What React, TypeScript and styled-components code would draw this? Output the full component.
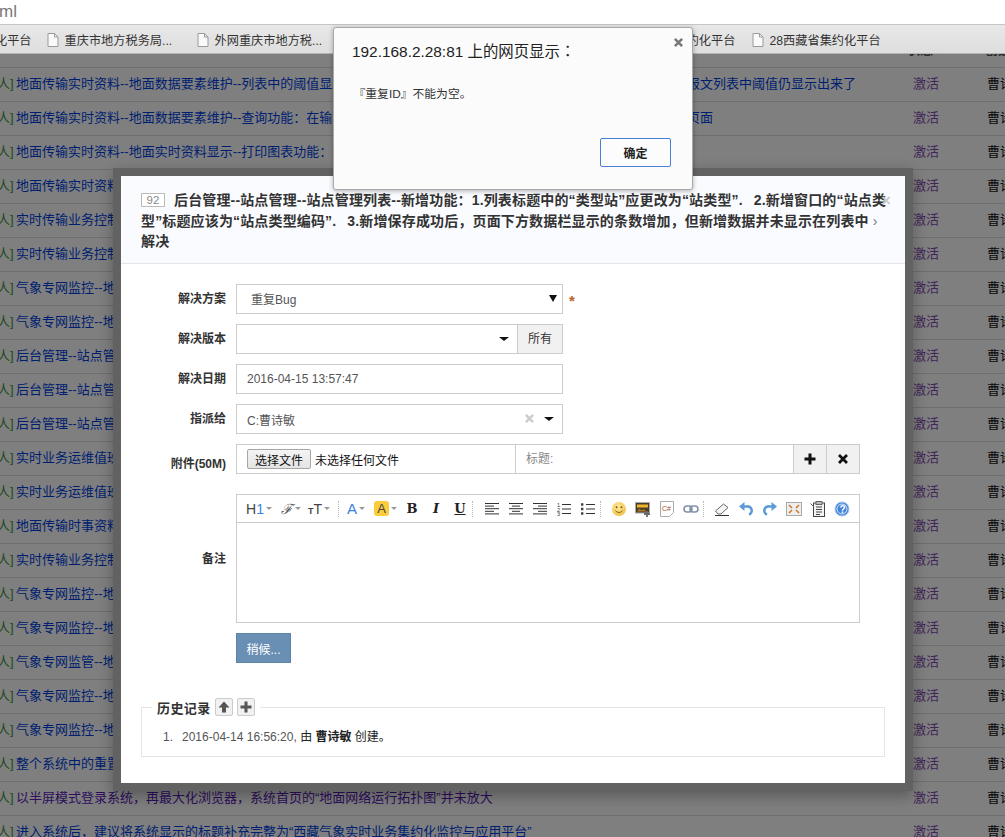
import React from "react";
import styled, { createGlobalStyle } from "styled-components";

const Global = createGlobalStyle`
  html, body { margin: 0; padding: 0; background: #7f7f7f; }
  * { box-sizing: border-box; }
  body { font-family: "Liberation Sans", "Noto Sans CJK SC", sans-serif; overflow: hidden; }
`;

const Screen = styled.div`
  position: relative;
  width: 1005px;
  height: 837px;
  overflow: hidden;
  background: #7f7f7f;
`;
const AddressBar = styled.div`
  height: 24px;
  background: #fff;
  color: #777;
  font-size: 17px;
  line-height: 24px;
  margin-left: -1px;
`;
const BookmarkBar = styled.div`
  height: 30px;
  display: flex;
  align-items: center;
  background: linear-gradient(#e8e8e8, #dedede);
  border-top: 1px solid #c6c6c6;
  border-bottom: 1px solid #b4b4b4;
  font-size: 12.2px;
  color: #333;
  white-space: nowrap;
  padding-top: 1px;
`;
const Bookmark = styled.div<{ $w?: number; $first?: boolean }>`
  display: flex;
  align-items: center;
  gap: 6px;
  flex: none;
  width: ${(p) => (p.$w ? `${p.$w}px` : "auto")};
  margin-left: ${(p) => (p.$first ? "-5px" : "0")};
`;
const FirstGap = styled.div`
  width: 15px;
  flex: none;
`;
const PageIcon = () => (
  <svg width="12" height="14" viewBox="0 0 12 14" style={{ flex: "none" }}>
    <path d="M1 .5h6.5L11 4v9.5H1z" fill="#fafafa" stroke="#9a9a9a" />
    <path d="M7.5.5V4H11" fill="none" stroke="#9a9a9a" />
  </svg>
);

const List = styled.div`
  height: 783px;
  overflow: hidden;
  font-size: 13px;
`;
const HeaderRow = styled.div`
  height: 14px;
  display: flex;
  align-items: flex-end;
  justify-content: flex-end;
  overflow: hidden;
  padding-bottom: 10px;
  border-bottom: 1px solid #6e6e6e;
  color: #2c2c2c;
  font-weight: bold;
  line-height: 15px;
`;
const HeaderCell = styled.div<{ $w: number }>`
  width: ${(p) => p.$w}px;
  flex: none;
  white-space: nowrap;
`;
const Row = styled.div`
  height: 34px;
  display: flex;
  align-items: center;
  padding-bottom: 4px;
  border-bottom: 1px solid #6e6e6e;
  white-space: nowrap;
  overflow: hidden;
`;
const Tag = styled.span`
  width: 16px;
  flex: none;
  color: #1c4a1c;
  font-size: 13px;
  overflow: hidden;
  text-indent: -3px;
`;
const Title = styled.span<{ $visited?: boolean }>`
  width: 897px;
  flex: none;
  overflow: hidden;
  color: ${(p) => (p.$visited ? "#2d0d5c" : "#001e70")};
`;
const Status = styled.span`
  width: 74px;
  flex: none;
  color: #3f2558;
`;
const Owner = styled.span`
  flex: none;
  color: #0a0a0a;
`;

const Modal = styled.div`
  position: absolute;
  left: 121px;
  top: 176px;
  width: 784px;
  height: 607px;
  background: #fff;
  box-shadow: 0 0 0 8px #626262, 0 5px 14px 8px rgba(0, 0, 0, 0.3);
`;
const ModalHeader = styled.div`
  position: relative;
  height: 88px;
  padding: 14px 20px 0;
  background: #fafbff;
  border-bottom: 1px solid #e5e5e5;
  font-size: 14px;
  font-weight: bold;
  line-height: 20.5px;
  letter-spacing: 0.15px;
  color: #333;
  white-space: nowrap;
`;
const IdBox = styled.span`
  display: inline-block;
  width: 24px;
  height: 14px;
  margin-right: 9px;
  border: 1px solid #bbb;
  background: #fff;
  color: #888;
  font-size: 11.5px;
  font-weight: normal;
  line-height: 12px;
  text-align: center;
  vertical-align: 1px;
`;
const DotGap = styled.span`
  padding-right: 7px;
`;
const Chevron = styled.span`
  font-weight: normal;
  color: #777;
`;
const CloseFaint = styled.span`
  position: absolute;
  right: 14px;
  top: 15px;
  color: #ccc;
  font-size: 16px;
  font-weight: bold;
`;
const Form = styled.div`
  padding: 20px 20px 0 0;
  display: flex;
  flex-direction: column;
  gap: 10px;
`;
const FormRow = styled.div<{ $h?: number; $after?: number }>`
  display: grid;
  grid-template-columns: 105px 1fr;
  column-gap: 10px;
  align-items: center;
  min-height: ${(p) => p.$h ?? 30}px;
  margin-bottom: ${(p) => p.$after ?? 0}px;
  font-size: 12px;
`;
const Label = styled.div<{ $up?: number; $down?: number }>`
  padding-bottom: ${(p) => p.$up ?? 3}px;
  padding-top: ${(p) => p.$down ?? 0}px;
  text-align: right;
  font-weight: bold;
  color: #333;
`;
const Field = styled.div<{ $w?: number }>`
  position: relative;
  width: ${(p) => p.$w ?? 327}px;
  height: 30px;
  display: flex;
  align-items: center;
  border: 1px solid #ccc;
  background: #fff;
  color: #555;
  padding-left: 10px;
`;
const SelectText = styled.span`
  flex: 1;
  padding-left: 4px;
  padding-bottom: 1px;
`;
const Arrow = styled.span<{ $r: number; $native?: boolean }>`
  position: absolute;
  right: ${(p) => p.$r}px;
  top: ${(p) => (p.$native ? 10 : 12)}px;
  border-left: ${(p) => (p.$native ? 4 : 5)}px solid transparent;
  border-right: ${(p) => (p.$native ? 4 : 5)}px solid transparent;
  border-top: ${(p) => (p.$native ? 7 : 4)}px solid #111;
`;
const Star = styled.span`
  position: absolute;
  left: 332px;
  top: 7px;
  color: #b5622a;
  font-size: 15px;
  font-weight: bold;
`;
const AddOn = styled.div`
  width: 46px;
  height: 30px;
  flex: none;
  margin-left: -1px;
  border: 1px solid #ccc;
  background: #f1f1f1;
  color: #333;
  text-align: center;
  line-height: 28px;
`;
const InputGroup = styled.div`
  display: flex;
  width: 327px;
`;
const ClearX = styled.span`
  position: absolute;
  right: 28px;
  top: 9px;
  display: flex;
`;
const FileRow = styled.div`
  width: 624px;
  height: 30px;
  display: flex;
  border: 1px solid #ccc;
`;
const FileCell = styled.div`
  width: 279px;
  flex: none;
  display: flex;
  align-items: center;
  gap: 4px;
  padding-left: 10px;
  color: #111;
  border-right: 1px solid #ccc;
`;
const FileButton = styled.button`
  width: 64px;
  height: 20px;
  padding: 0;
  font: inherit;
  color: #111;
  background: linear-gradient(#f4f4f4, #e4e4e4);
  border: 1px solid #a6a6a6;
  border-radius: 2px;
`;
const CaptionCell = styled.div`
  flex: 1;
  padding-left: 10px;
  line-height: 28px;
  color: #888;
`;
const IconCell = styled.div<{ $w: number }>`
  width: ${(p) => p.$w}px;
  flex: none;
  display: flex;
  align-items: center;
  justify-content: center;
  background: #f1f1f1;
  border-left: 1px solid #ccc;
`;
const Editor = styled.div`
  width: 624px;
  height: 129px;
  border: 1px solid #ccc;
`;
const Toolbar = styled.div`
  height: 28px;
  display: flex;
  align-items: center;
  padding-left: 9px;
  border-bottom: 1px solid #ccc;
  color: #444;
`;
const Tool = styled.div<{ $w?: number; $center?: boolean }>`
  width: ${(p) => p.$w ?? 24}px;
  flex: none;
  height: 22px;
  display: flex;
  align-items: center;
  justify-content: ${(p) => (p.$center === false ? "flex-start" : "center")};
`;
const Sep = styled.div<{ $w: number }>`
  width: ${(p) => p.$w}px;
  flex: none;
  height: 16px;
  display: flex;
  justify-content: flex-start;
  &::before {
    content: "";
    height: 16px;
    border-left: 1px dotted #bbb;
  }
`;
const H1Text = styled.span`
  font-size: 14px;
  color: #444;
  b { font-weight: normal; color: #3b82e0; }
`;
const Caret = styled.span`
  display: inline-block;
  margin-left: 2px;
  border-left: 3px solid transparent;
  border-right: 3px solid transparent;
  border-top: 3px solid #999;
`;
const FontF = styled.span`
  font-family: "DejaVu Serif", serif;
  font-style: italic;
  font-size: 14px;
  color: #555;
`;
const SizeT = styled.span`
  font-size: 14px;
  color: #444;
  small { font-size: 9px; font-weight: bold; }
`;
const ColorA = styled.span`
  font-size: 15px;
  color: #3b82e0;
`;
const HighA = styled.span`
  width: 15px;
  height: 15px;
  display: inline-flex;
  align-items: center;
  justify-content: center;
  background: #fbcd3c;
  border-radius: 3px;
  font-size: 13px;
  color: #444;
`;
const SerifMark = styled.span<{ $i?: boolean; $u?: boolean }>`
  font-family: "DejaVu Serif", serif;
  font-weight: bold;
  font-size: 13px;
  color: #222;
  font-style: ${(p) => (p.$i ? "italic" : "normal")};
  text-decoration: ${(p) => (p.$u ? "underline" : "none")};
`;
const SubmitButton = styled.button`
  width: 55px;
  height: 30px;
  margin-left: 115px;
  padding: 0;
  border: 1px solid #5f84aa;
  background: #6a8fb4;
  color: #fff;
  font: inherit;
  font-size: 12px;
`;
const History = styled.fieldset`
  margin: 35px 20px 0;
  padding: 11px 21px 0;
  height: 59px;
  border: 1px solid #e5e5e5;
  font-size: 12px;
  color: #555;
`;
const Legend = styled.legend`
  margin-left: -11px;
  padding: 0 5px;
  display: flex;
  align-items: center;
  gap: 4px;
  height: 18px;
  font-weight: bold;
  font-size: 13px;
  letter-spacing: 0.4px;
  color: #333;
`;
const HistoryBtn = styled.span`
  width: 18px;
  height: 18px;
  display: flex;
  align-items: center;
  justify-content: center;
  background: #f1f1f1;
  border: 1px solid #ccc;
  border-radius: 2px;
`;
const HistoryItem = styled.div`
  display: flex;
  gap: 9px;
  line-height: 20px;
  b { color: #222; }
  em { font-style: normal; color: #222; }
`;

const Alert = styled.div`
  position: absolute;
  left: 333px;
  top: 27px;
  width: 360px;
  height: 163px;
  padding: 13px 18px;
  background: #fbfbfb;
  border: 1px solid #a8a8a8;
  border-radius: 3px;
  box-shadow: 0 1px 5px rgba(0, 0, 0, 0.3);
`;
const AlertTitle = styled.div`
  font-size: 15.4px;
  line-height: 18px;
  color: #222;
`;
const FullColon = styled.span`
  font-family: "Noto Sans CJK TC", sans-serif;
`;
const AlertClose = styled.span`
  position: absolute;
  right: 9px;
  top: 10px;
  display: flex;
`;
const AlertBody = styled.div`
  margin-top: 24px;
  margin-left: 1.5px;
  font-size: 11.8px;
  line-height: 18px;
  color: #333;
`;
const AlertButton = styled.button`
  position: absolute;
  right: 21px;
  bottom: 22px;
  width: 71px;
  height: 29px;
  padding: 0;
  background: #fcfcfc;
  border: 1px solid #4a7fd8;
  border-radius: 2px;
  font: inherit;
  font-size: 12px;
  font-weight: bold;
  color: #222;
`;

const svgProps = { width: 16, height: 16, viewBox: "0 0 16 16" } as const;
const lines = (rows: [number, number][], sw = 1) =>
  rows.map(([a, b], i) => <path key={i} d={`M${a} ${2.5 + i * 2.6}H${b}`} stroke="#333" strokeWidth={sw} />);

const AlignIcon = ({ kind }: { kind: "l" | "c" | "r" }) => {
  const r: Record<string, [number, number][]> = {
    l: [[1, 15], [1, 10], [1, 15], [1, 10], [1, 15]],
    c: [[1, 15], [4, 12], [1, 15], [4, 12], [1, 15]],
    r: [[1, 15], [6, 15], [1, 15], [6, 15], [1, 15]],
  };
  return <svg {...svgProps}>{lines(r[kind])}</svg>;
};
const OlIcon = () => (
  <svg {...svgProps}>
    <text x="1" y="6" fontSize="5.5" fill="#333" fontFamily="Liberation Sans">1</text>
    <text x="1" y="10.5" fontSize="5.5" fill="#333" fontFamily="Liberation Sans">2</text>
    <text x="1" y="15" fontSize="5.5" fill="#333" fontFamily="Liberation Sans">3</text>
    <path d="M6 3.5h9M6 8h9M6 12.5h9" stroke="#333" />
  </svg>
);
const UlIcon = () => (
  <svg {...svgProps}>
    <path d="M1 3.5h3M1 8h3M1 12.5h3" stroke="#444" strokeWidth="2.4" strokeDasharray="2.4 1" />
    <path d="M6 3.5h9M6 8h9M6 12.5h9" stroke="#333" />
  </svg>
);
const Smile = () => (
  <svg {...svgProps}>
    <defs>
      <radialGradient id="smileFill" cx="45%" cy="35%" r="70%">
        <stop offset="0%" stopColor="#fdeb9a" />
        <stop offset="100%" stopColor="#efbe45" />
      </radialGradient>
    </defs>
    <circle cx="8" cy="8" r="7" fill="url(#smileFill)" />
    <circle cx="5.6" cy="6.2" r="1" fill="#7a5a10" />
    <circle cx="10.4" cy="6.2" r="1" fill="#7a5a10" />
    <path d="M4.5 9.5c1.5 2.6 5.5 2.6 7 0" fill="none" stroke="#8a6410" />
  </svg>
);
const ImageIcon = () => (
  <svg {...svgProps}>
    <rect x="0.5" y="1.5" width="14" height="10.5" fill="#4a3c2a" stroke="#aaa" />
    <rect x="2" y="3.5" width="11" height="3" fill="#eeb52c" />
    <path d="M2 10.5l2.5-3 2 2 2-1.5 3 2.5z" fill="#a97a20" />
    <path d="M12 10v6M9 13h6" stroke="#6b6b6b" strokeWidth="1.8" />
  </svg>
);
const CodeIcon = () => (
  <svg {...svgProps}>
    <path d="M1.5.5h13v11l-4 4h-9z" fill="#fff" stroke="#aaa" />
    <text x="3" y="10" fontSize="7" fill="#a5502e" fontFamily="Liberation Sans">C#</text>
  </svg>
);
const LinkIcon = () => (
  <svg {...svgProps}>
    <rect x="1" y="5" width="8" height="6" rx="3" fill="none" stroke="#8191a8" strokeWidth="1.6" />
    <rect x="7" y="5" width="8" height="6" rx="3" fill="none" stroke="#8191a8" strokeWidth="1.6" />
  </svg>
);
const EraserIcon = () => (
  <svg {...svgProps}>
    <path d="M1.5 10L9.5 3l4.5 3.5-7 6.5H4z" fill="#f4f4f4" stroke="#666" />
    <path d="M1 14.5h14" stroke="#333" />
  </svg>
);
const UndoIcon = ({ flip }: { flip?: boolean }) => (
  <svg {...svgProps} style={flip ? { transform: "scaleX(-1)" } : undefined}>
    <path d="M5 5.5h3.5a4.2 4.2 0 0 1 2.5 8" fill="none" stroke="#5d9bd6" strokeWidth="2.6" />
    <path d="M1 5.5L6.5 1v9z" fill="#5d9bd6" />
  </svg>
);
const FullIcon = () => (
  <svg {...svgProps}>
    <rect x="0.5" y="1.5" width="15" height="13" fill="#eee" stroke="#aaa" />
    <path d="M3 4l3 3M3 12l3-3M13 4l-3 3M13 12l-3-3" stroke="#cf7a2c" strokeWidth="1.6" />
  </svg>
);
const PasteIcon = () => (
  <svg {...svgProps}>
    <rect x="3.5" y="2" width="11" height="13.5" fill="#f4f4f4" stroke="#444" />
    <rect x="6" y="0.5" width="6" height="3" fill="#bbb" stroke="#666" />
    <path d="M6 6h6M6 8.5h6M6 11h6M6 13.5h4" stroke="#444" />
    <path d="M0.5 2.5L4 6" stroke="#666" />
  </svg>
);
const HelpIcon = () => (
  <svg {...svgProps}>
    <circle cx="8" cy="8" r="7" fill="#3f82d8" stroke="#a6c8ee" />
    <circle cx="8" cy="8" r="5" fill="none" stroke="#fff" strokeWidth="0.8" />
    <text x="5.4" y="11.5" fontSize="10" fontWeight="bold" fill="#fff" fontFamily="Liberation Sans">?</text>
  </svg>
);
const PlusIcon = ({ c = "#111", s = 3 }: { c?: string; s?: number }) => (
  <svg width="12" height="12" viewBox="0 0 12 12">
    <path d="M6 .5v11M.5 6h11" stroke={c} strokeWidth={s} />
  </svg>
);
const TimesIcon = ({ c = "#111", size = 10 }: { c?: string; size?: number }) => (
  <svg width={size} height={size} viewBox="0 0 10 10">
    <path d="M1 1l8 8M9 1L1 9" stroke={c} strokeWidth="2.8" />
  </svg>
);
const UpIcon = () => (
  <svg width="12" height="12" viewBox="0 0 12 12">
    <path d="M6 .5L11.5 6.5H8v5H4v-5H.5z" fill="#555" />
  </svg>
);

const titles: [string, boolean?][] = [
  ["地面传输实时资料--地面数据要素维护--列表中的阈值显示功能：设置隐藏后刷新页面重新进入系统查看时发现， 存在报文列表中阈值仍显示出来了"],
  ["地面传输实时资料--地面数据要素维护--查询功能：在输入查询条件之后，点击查询按钮， 系统未跳转到相应查询结果页面"],
  ["地面传输实时资料--地面实时资料显示--打印图表功能：打印功能无法使用"],
  ["地面传输实时资料--地面实时资料显示"],
  ["实时传输业务控制--报文传输"],
  ["实时传输业务控制--报文传输"],
  ["气象专网监控--地面网络"],
  ["气象专网监控--地面网络"],
  ["后台管理--站点管理--站点"],
  ["后台管理--站点管理--站点"],
  ["后台管理--站点管理--站点"],
  ["实时业务运维值班--值班"],
  ["实时业务运维值班--值班"],
  ["地面传输时事资料--地面"],
  ["实时传输业务控制--报文"],
  ["气象专网监控--地面网络"],
  ["气象专网监控--地面网络"],
  ["气象专网监管--地面网络"],
  ["气象专网监控--地面网络"],
  ["气象专网监控--地面网络"],
  ["整个系统中的重置按钮"],
  ["以半屏模式登录系统，再最大化浏览器，系统首页的“地面网络运行拓扑图”并未放大", true],
  ["进入系统后，建议将系统显示的标题补充完整为“西藏气象实时业务集约化监控与应用平台”"],
];

export default function App() {
  return (
    <Screen>
      <Global />
      <AddressBar>ml</AddressBar>
      <BookmarkBar>
        <Bookmark $first>化平台</Bookmark>
        <FirstGap />
        <Bookmark $w={150}><PageIcon />重庆市地方税务局...</Bookmark>
        <Bookmark $w={150}><PageIcon />外网重庆市地方税...</Bookmark>
        <Bookmark $w={249}><PageIcon />内网业务平台</Bookmark>
        <Bookmark $w={156}><PageIcon />青海省气象集约化平台</Bookmark>
        <Bookmark><PageIcon />28西藏省集约化平台</Bookmark>
      </BookmarkBar>
      <List>
        <HeaderRow>
          <HeaderCell $w={78}>状态 ▾</HeaderCell>
          <HeaderCell $w={20}>创建</HeaderCell>
        </HeaderRow>
        {titles.map(([t, v], i) => (
          <Row key={i}>
            <Tag>人]</Tag>
            <Title $visited={v}>{t}</Title>
            <Status>激活</Status>
            <Owner>曹诗敏</Owner>
          </Row>
        ))}
      </List>

      <Modal>
        <ModalHeader>
          <IdBox>92</IdBox>
          后台管理--站点管理--站点管理列表--新增功能：1.列表标题中的“类型站”应更改为“站类型”<DotGap>. </DotGap>2.新增窗口的“站点类
          <br />
          型”标题应该为“站点类型编码”<DotGap>. </DotGap>3.新增保存成功后，页面下方数据栏显示的条数增加，但新增数据并未显示在列表中 <Chevron>›</Chevron>
          <br />
          解决
          <CloseFaint>×</CloseFaint>
        </ModalHeader>
        <Form>
          <FormRow>
            <Label>解决方案</Label>
            <Field>
              <SelectText>重复Bug</SelectText>
              <Arrow $r={5} $native />
              <Star>*</Star>
            </Field>
          </FormRow>
          <FormRow>
            <Label>解决版本</Label>
            <InputGroup>
              <Field $w={282}>
                <Arrow $r={8} />
              </Field>
              <AddOn>所有</AddOn>
            </InputGroup>
          </FormRow>
          <FormRow>
            <Label>解决日期</Label>
            <Field>2016-04-15 13:57:47</Field>
          </FormRow>
          <FormRow>
            <Label>指派给</Label>
            <Field>
              C:曹诗敏
              <ClearX><TimesIcon c="#ccc" size={9} /></ClearX>
              <Arrow $r={8} />
            </Field>
          </FormRow>
          <FormRow $after={10}>
            <Label $up={0} $down={7}>附件(50M)</Label>
            <FileRow>
              <FileCell>
                <FileButton>选择文件</FileButton>
                未选择任何文件
              </FileCell>
              <CaptionCell>标题:</CaptionCell>
              <IconCell $w={33}><PlusIcon /></IconCell>
              <IconCell $w={33}><TimesIcon /></IconCell>
            </FileRow>
          </FormRow>
          <FormRow $h={129}>
            <Label $up={2}>备注</Label>
            <Editor>
              <Toolbar>
                <Tool $w={35} $center={false}><H1Text>H<b>1</b></H1Text><Caret /></Tool>
                <Tool $w={27} $center={false}><FontF>ℱ</FontF><Caret /></Tool>
                <Tool $w={30} $center={false}><SizeT><small>T</small>T</SizeT><Caret /></Tool>
                <Sep $w={9} />
                <Tool $w={27} $center={false}><ColorA>A</ColorA><Caret /></Tool>
                <Tool $w={26} $center={false}><HighA>A</HighA><Caret /></Tool>
                <Tool><SerifMark>B</SerifMark></Tool>
                <Tool><SerifMark $i>I</SerifMark></Tool>
                <Tool><SerifMark $u>U</SerifMark></Tool>
                <Sep $w={8} />
                <Tool><AlignIcon kind="l" /></Tool>
                <Tool><AlignIcon kind="c" /></Tool>
                <Tool><AlignIcon kind="r" /></Tool>
                <Tool><OlIcon /></Tool>
                <Tool><UlIcon /></Tool>
                <Sep $w={7} />
                <Tool><Smile /></Tool>
                <Tool><ImageIcon /></Tool>
                <Tool><CodeIcon /></Tool>
                <Tool><LinkIcon /></Tool>
                <Sep $w={7} />
                <Tool><EraserIcon /></Tool>
                <Tool><UndoIcon /></Tool>
                <Tool><UndoIcon flip /></Tool>
                <Tool><FullIcon /></Tool>
                <Tool><PasteIcon /></Tool>
                <Tool><HelpIcon /></Tool>
              </Toolbar>
            </Editor>
          </FormRow>
          <SubmitButton>稍候...</SubmitButton>
        </Form>
        <History>
          <Legend>
            历史记录
            <HistoryBtn><UpIcon /></HistoryBtn>
            <HistoryBtn><PlusIcon c="#555" /></HistoryBtn>
          </Legend>
          <HistoryItem>
            <span>1.</span>
            <span>2016-04-14 16:56:20, <em>由</em> <b>曹诗敏</b> <em>创建。</em></span>
          </HistoryItem>
        </History>
      </Modal>

      <Alert>
        <AlertTitle>192.168.2.28:81 上的网页显示<FullColon>：</FullColon></AlertTitle>
        <AlertClose><TimesIcon c="#777" size={9} /></AlertClose>
        <AlertBody>『重复ID』不能为空。</AlertBody>
        <AlertButton>确定</AlertButton>
      </Alert>
    </Screen>
  );
}
